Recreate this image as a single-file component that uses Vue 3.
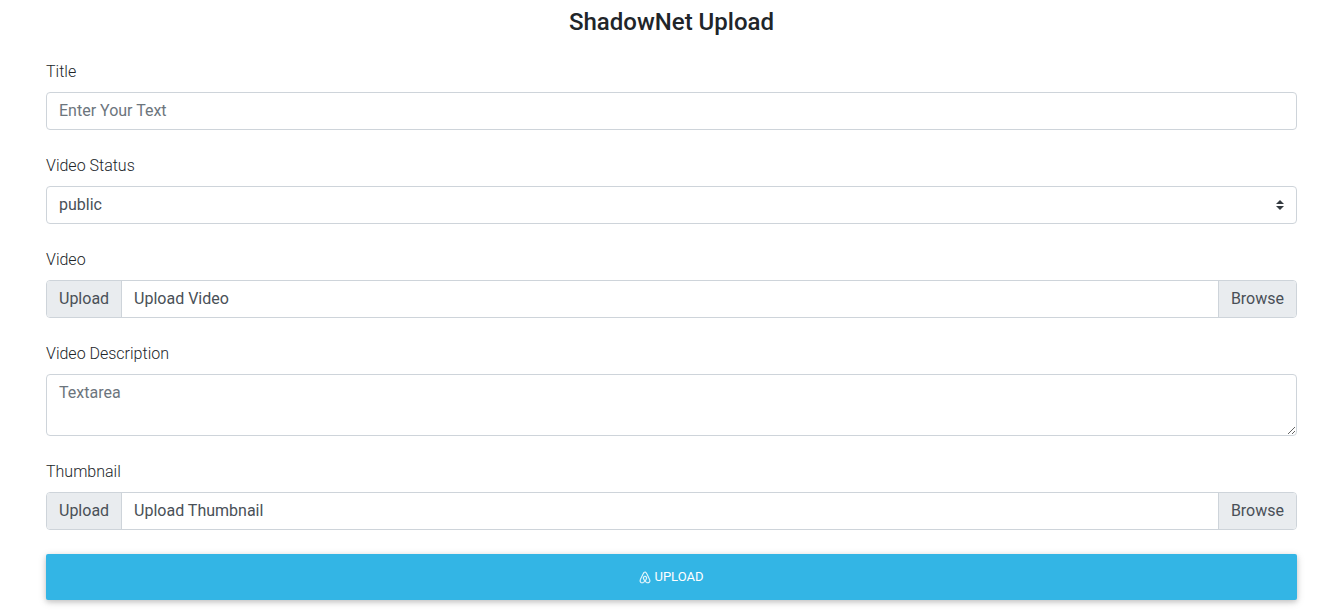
<script setup>
import { reactive, ref } from 'vue'

const title = ref('')
const status = ref('public')
const description = ref('')
const fileNames = reactive({
  video: 'Upload Video',
  thumbnail: 'Upload Thumbnail'
})

function pick(event, key) {
  const file = event.target.files[0]
  if (file) fileNames[key] = file.name
}
</script>

<template>
  <main class="page">
    <h4 class="heading">ShadowNet Upload</h4>
    <form class="form" @submit.prevent>
      <div class="group">
        <label for="title">Title</label>
        <input id="title" v-model="title" class="control" type="text" placeholder="Enter Your Text" />
      </div>

      <div class="group">
        <label for="status">Video Status</label>
        <div class="select-wrap">
          <select id="status" v-model="status" class="control">
            <option value="public">public</option>
            <option value="private">private</option>
          </select>
          <svg class="arrows" viewBox="0 0 4 5" aria-hidden="true">
            <path d="M2 0L0 2h4zm0 5L0 3h4z" />
          </svg>
        </div>
      </div>

      <div class="group">
        <label for="video">Video</label>
        <div class="file-row">
          <span class="addon">Upload</span>
          <div class="file">
            <input id="video" type="file" accept="video/*" @change="pick($event, 'video')" />
            <span class="file-name">{{ fileNames.video }}</span>
            <span class="browse">Browse</span>
          </div>
        </div>
      </div>

      <div class="group">
        <label for="description">Video Description</label>
        <textarea id="description" v-model="description" class="control" rows="2" placeholder="Textarea"></textarea>
      </div>

      <div class="group">
        <label for="thumbnail">Thumbnail</label>
        <div class="file-row">
          <span class="addon">Upload</span>
          <div class="file">
            <input id="thumbnail" type="file" accept="image/*" @change="pick($event, 'thumbnail')" />
            <span class="file-name">{{ fileNames.thumbnail }}</span>
            <span class="browse">Browse</span>
          </div>
        </div>
      </div>

      <button class="submit" type="submit">
        <svg class="icon" viewBox="0 0 448 512" aria-hidden="true">
          <path d="M224 373.12c-25.24-31.67-40.08-59.43-45-83.18-22.55-88 112.61-88 90.06 0-5.45 24.25-20.29 52-45 83.18zm138.15 73.23c-42.06 18.31-83.67-10.88-119.3-50.47 103.9-130.07 46.11-200-18.85-200-54.92 0-85.16 46.51-73.28 100.5 6.93 29.19 25.23 62.39 54.43 99.5-32.53 36.05-60.55 52.69-85.15 54.92-50 7.43-89.11-41.06-71.3-91.09 15.1-39.16 111.72-231.18 115.87-241.56 15.75-30.07 25.56-57.4 59.38-57.4 32.34 0 43.4 25.94 60.37 59.87 36 70.62 89.35 177.48 114.84 239.09 13.17 33.07-1.37 71.29-37.01 86.64zm47-136.12C280.27 35.93 273.13 32 224 32c-45.52 0-64.87 31.67-84.66 72.79C33.18 317.1 22.89 347.19 22 349.81-3.22 419.14 48.74 480 111.63 480c21.71 0 60.61-6.06 112.37-62.4 58.68 63.78 101.26 62.4 112.37 62.4 62.89.05 114.85-60.86 89.61-130.19.02-3.89-16.82-38.9-16.82-39.58z" />
        </svg>
        <span>UPLOAD</span>
      </button>
    </form>
  </main>
</template>

<style>
body {
  margin: 0;
  background: #fff;
}
</style>

<style scoped>
.page {
  box-sizing: border-box;
  padding: 8px 44px 15px 46px;
  font-family: Roboto, sans-serif;
  font-size: 16px;
  line-height: 24px;
  font-weight: 300;
  color: #212529;
}
.heading {
  margin: 0 0 24px;
  font-size: 24px;
  line-height: 28px;
  font-weight: 500;
  text-align: center;
}
.form,
.group {
  display: flex;
  flex-direction: column;
}
.form {
  gap: 24px;
}
.group {
  gap: 8px;
}
.control {
  display: block;
  box-sizing: border-box;
  width: 100%;
  margin: 0;
  padding: 6px 12px;
  border: 1px solid #ced4da;
  border-radius: 4px;
  background: #fff;
  font: inherit;
  font-weight: 400;
  color: #495057;
  appearance: none;
}
.control::placeholder {
  color: #6c757d;
  opacity: 1;
}
textarea.control {
  resize: vertical;
  overflow: auto;
}
.select-wrap {
  position: relative;
}
.arrows {
  position: absolute;
  top: 0;
  bottom: 0;
  right: 13px;
  width: 8px;
  height: 10px;
  margin: auto 0;
  fill: #343a40;
  pointer-events: none;
}
.file-row {
  display: flex;
  border: 1px solid #ced4da;
  border-radius: 4px;
  overflow: hidden;
  font-weight: 400;
  color: #495057;
}
.addon,
.browse {
  padding: 6px 12px;
  background: #e9ecef;
}
.addon {
  border-right: 1px solid #ced4da;
}
.browse {
  border-left: 1px solid #ced4da;
}
.file {
  position: relative;
  display: flex;
  flex: 1;
  min-width: 0;
}
.file input {
  position: absolute;
  inset: 0;
  width: 100%;
  height: 100%;
  margin: 0;
  opacity: 0;
}
.file-name {
  flex: 1;
  min-width: 0;
  padding: 6px 12px;
  overflow: hidden;
  text-overflow: ellipsis;
  white-space: nowrap;
}
.submit {
  display: flex;
  align-items: center;
  justify-content: center;
  gap: 3px;
  width: 100%;
  padding: 13px 34px;
  border: 0;
  border-radius: 2px;
  background: #33b5e5;
  box-shadow: 0 2px 5px rgba(0, 0, 0, 0.16), 0 2px 10px rgba(0, 0, 0, 0.12);
  font-family: inherit;
  font-size: 13px;
  line-height: 20px;
  font-weight: 400;
  color: #fff;
  cursor: pointer;
}
.icon {
  width: 12px;
  height: 13px;
  fill: currentColor;
  stroke: currentColor;
  stroke-width: 12;
}
</style>
